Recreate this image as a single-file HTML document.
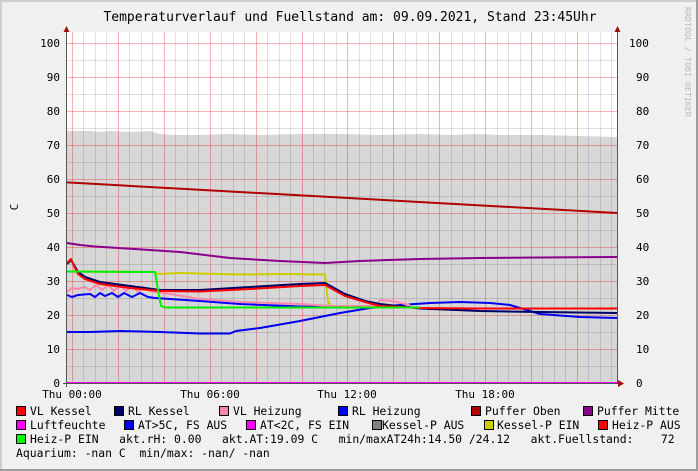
<!DOCTYPE html>
<html><head><meta charset="utf-8"><style>
html,body{margin:0;padding:0;background:#f0f0f0;}
svg{display:block;}
text{font-family:"DejaVu Sans Mono","Liberation Mono",monospace;fill:#000;}
</style></head><body>
<svg width="698" height="471" viewBox="0 0 698 471" xmlns="http://www.w3.org/2000/svg">
<rect x="0" y="0" width="698" height="471" fill="#f0f0f0"/>
<rect x="0" y="0" width="698" height="2" fill="#cfcfcf"/>
<rect x="0" y="0" width="2" height="471" fill="#cfcfcf"/>
<rect x="696" y="0" width="2" height="471" fill="#9e9e9e"/>
<rect x="0" y="469" width="698" height="2" fill="#9e9e9e"/>
<text x="350" y="21" font-size="13" text-anchor="middle">Temperaturverlauf und Fuellstand am: 09.09.2021, Stand 23:45Uhr</text>
<text transform="translate(685,7) rotate(90)" font-size="8.3" style="fill:#b8b8b8">RRDTOOL / TOBI OETIKER</text>
<rect x="67" y="32" width="550" height="351" fill="#ffffff"/>
<path d="M67,131 L90,131 L100,132 L110,131 L130,132 L150,131 L160,134 L175,135 L200,135 L230,134 L260,135 L300,134 L340,134 L380,135 L420,134 L450,135 L480,134 L500,135 L540,135 L580,136 L617,137 L617,383 L67,383 Z" fill="#d7d7d7"/>
<g id="grid"></g>
<g fill="none" stroke-width="2" stroke-linejoin="round">
<path d="M67,182.4 L617,213" stroke="#b00000"/>
<path d="M67,243 L80,245 L95,246.5 L150,250 L180,252 L230,258 L280,261 L325,263 L360,261 L420,259 L480,258 L540,257.5 L617,257" stroke="#8b008b"/>
<path d="M67,271.5 L155,272 L158,274 L180,273 L240,274.5 L280,274 L325,274.5 L328,302 L332,307 L380,307" stroke="#cccc00"/>
<path d="M67,332 L90,332 L120,331 L160,332 L200,333.5 L230,333.5 L236,331 L260,328 L300,321 L340,313 L370,308 L400,305 L430,303 L460,302 L490,303 L510,305 L540,314 L580,317 L617,318" stroke="#0000ee"/>
<path d="M67,295 L72,297 L78,295 L90,294 L95,297 L100,293 L105,296 L112,293 L118,297 L124,293 L132,297 L140,293 L148,297 L155,298 L170,299 L200,301 L240,304 L300,306.5 L380,307.5 L410,307" stroke="#0000ff"/>
<path d="M67,292 L72,288 L78,289 L84,287 L90,290 L96,285 L102,290 L108,285 L114,291 L120,285 L126,291 L132,286 L138,292 L144,287 L150,291 L170,294 L200,299 L240,302 L300,304 L330,306 L376,306 L380,300 L392,301 L410,305" stroke="#ff88aa"/>
<path d="M67,264 L71,260 L74,265 L78,272 L85,277 L100,282 L130,286 L160,290 L200,290 L250,287 L300,284 L325,283 L345,294 L365,301 L380,304 L420,308.5 L480,311 L540,312 L617,313" stroke="#000066"/>
<path d="M67,263 L71,259 L74,266 L78,274 L85,279 L100,284 L130,288 L160,291 L200,291.5 L250,289 L300,286 L325,285 L345,296 L365,302 L380,306 L420,308 L480,308.5 L617,308.5" stroke="#ff0000"/>
<path d="M67,271.5 L155,272 L158,290 L161,306 L165,307.5 L420,307.5" stroke="#00ee00"/>
<path d="M67,383 L617,383" stroke="#ff00ff"/>
</g>
<path d="M66.5,28 L66.5,387 M63,383.5 L622,383.5 M617.5,28 L617.5,383" stroke="#555" stroke-width="1" fill="none"/>
<path d="M63.5,32 L66.5,26 L69.5,32 Z M614.5,32 L617.5,26 L620.5,32 Z M618,380 L624,383.5 L618,387 Z" fill="#a01010"/>
<g font-size="11">
<text x="60" y="387" text-anchor="end">0</text><text x="60" y="353" text-anchor="end">10</text><text x="60" y="319" text-anchor="end">20</text><text x="60" y="285" text-anchor="end">30</text><text x="60" y="251" text-anchor="end">40</text><text x="60" y="217" text-anchor="end">50</text><text x="60" y="183" text-anchor="end">60</text><text x="60" y="149" text-anchor="end">70</text><text x="60" y="115" text-anchor="end">80</text><text x="60" y="81" text-anchor="end">90</text><text x="60" y="47" text-anchor="end">100</text>
<text x="636" y="387">0</text><text x="636" y="353">10</text><text x="636" y="319">20</text><text x="636" y="285">30</text><text x="636" y="251">40</text><text x="636" y="217">50</text><text x="636" y="183">60</text><text x="636" y="149">70</text><text x="636" y="115">80</text><text x="636" y="81">90</text><text x="629" y="47">100</text>
<text x="72" y="398" text-anchor="middle">Thu 00:00</text><text x="210" y="398" text-anchor="middle">Thu 06:00</text><text x="347" y="398" text-anchor="middle">Thu 12:00</text><text x="485" y="398" text-anchor="middle">Thu 18:00</text>
<text transform="translate(18,207) rotate(-90)" text-anchor="middle">C</text>
</g>
<g stroke="#000" stroke-width="1">
<rect x="16.5" y="406.5" width="9" height="9" fill="#ff0000"/>
<rect x="114.5" y="406.5" width="9" height="9" fill="#000066"/>
<rect x="219.5" y="406.5" width="9" height="9" fill="#ff88aa"/>
<rect x="338.5" y="406.5" width="9" height="9" fill="#0000ff"/>
<rect x="471.5" y="406.5" width="9" height="9" fill="#b00000"/>
<rect x="583.5" y="406.5" width="9" height="9" fill="#8b008b"/>
<rect x="16.5" y="420.5" width="9" height="9" fill="#ff00ff"/>
<rect x="124.5" y="420.5" width="9" height="9" fill="#0000ee"/>
<rect x="246.5" y="420.5" width="9" height="9" fill="#ff00ff"/>
<rect x="372.5" y="420.5" width="9" height="9" fill="#808080"/>
<rect x="484.5" y="420.5" width="9" height="9" fill="#cccc00"/>
<rect x="598.5" y="420.5" width="9" height="9" fill="#ff0000"/>
<rect x="16.5" y="434.5" width="9" height="9" fill="#00ff00"/>
</g>
<g font-size="11.4">
<text x="30" y="415">VL Kessel</text><text x="128" y="415">RL Kessel</text><text x="233" y="415">VL Heizung</text><text x="352" y="415">RL Heizung</text><text x="485" y="415">Puffer Oben</text><text x="597" y="415">Puffer Mitte</text>
<text x="30" y="429">Luftfeuchte</text><text x="138" y="429">AT&gt;5C, FS AUS</text><text x="260" y="429">AT&lt;2C, FS EIN</text><text x="382" y="429">Kessel-P AUS</text><text x="497" y="429">Kessel-P EIN</text><text x="612" y="429">Heiz-P AUS</text>
<text x="30" y="443" xml:space="preserve">Heiz-P EIN   akt.rH: 0.00   akt.AT:19.09 C   min/maxAT24h:14.50 /24.12   akt.Fuellstand:    72</text>
<text x="16" y="457" xml:space="preserve">Aquarium: -nan C  min/max: -nan/ -nan</text>
</g>
<script>
(function(){
var g=document.getElementById('grid');var ns='http://www.w3.org/2000/svg';
function ln(x1,y1,x2,y2,c,o){var l=document.createElementNS(ns,'line');l.setAttribute('x1',x1);l.setAttribute('y1',y1);l.setAttribute('x2',x2);l.setAttribute('y2',y2);l.setAttribute('stroke',c);l.setAttribute('stroke-opacity',o);l.setAttribute('stroke-width',1);g.appendChild(l);}
for(var i=-1;i<48;i++){var x=Math.round(72+i*11.475)+0.5;if(x<67||x>617)continue;if(i%4==0)ln(x,32,x,383,'#e00000',0.3);else ln(x,32,x,383,'#000',0.12);}
for(var v=5;v<=100;v+=5){var y=Math.round(383-3.4*v)+0.5;if(v%10==0)ln(67,y,617,y,'#e00000',0.3);else ln(67,y,617,y,'#000',0.12);}
})();
</script>
</svg>
</body></html>
